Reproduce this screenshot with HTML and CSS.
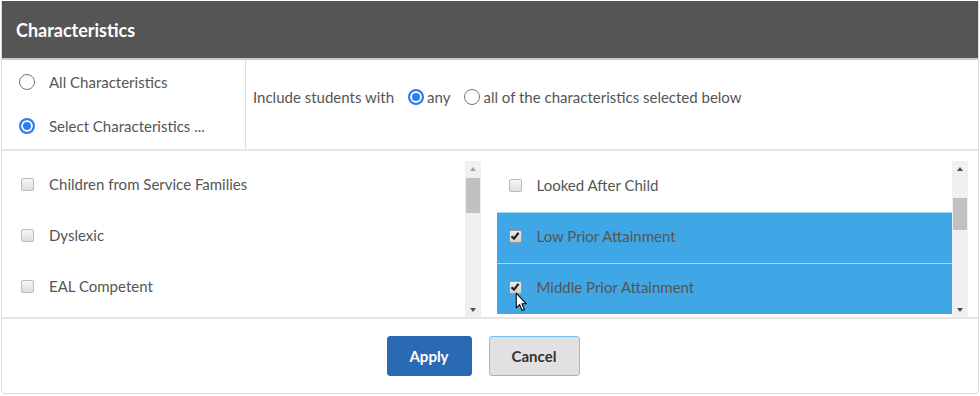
FILE: index.html
```html
<!DOCTYPE html>
<html lang="en">
<head>
  <meta charset="UTF-8" />
  <title>Characteristics</title>
  <link rel="stylesheet" href="styles.css">
</head>
<body>
  <div class="panel">
    <!-- Header -->
    <div class="panel-head">Characteristics</div>

    <!-- Scope choice -->
    <div class="scope">
      <div class="scope-left">
        <label class="opt"><input type="radio" name="scope" /> <span>All Characteristics</span></label>
        <label class="opt"><input type="radio" name="scope" checked /> <span>Select Characteristics ...</span></label>
      </div>
      <div class="scope-right">
        <span class="lead">Include students with</span>
        <label class="inline"><input type="radio" name="match" checked /><span>any</span></label>
        <label class="inline"><input type="radio" name="match" /><span>all of the characteristics selected below</span></label>
      </div>
    </div>

    <!-- Lists -->
    <div class="lists">
      <div class="list">
        <ul class="items">
          <li class="item"><span class="box"></span>Children from Service Families</li>
          <li class="item"><span class="box"></span>Dyslexic</li>
          <li class="item"><span class="box"></span>EAL Competent</li>
        </ul>
        <div class="scrollbar">
          <span class="arrow up dim"></span>
          <span class="thumb thumb-left"></span>
          <span class="arrow down"></span>
        </div>
      </div>
      <div class="list">
        <ul class="items">
          <li class="item"><span class="box"></span>Looked After Child</li>
          <li class="item selected"><span class="box checked"><svg viewBox="0 0 10 10"><path d="M1.5 5.2 L4 7.6 L8.6 1.8" /></svg></span>Low Prior Attainment</li>
          <li class="item selected"><span class="box checked"><svg viewBox="0 0 10 10"><path d="M1.5 5.2 L4 7.6 L8.6 1.8" /></svg></span>Middle Prior Attainment</li>
        </ul>
        <div class="scrollbar">
          <span class="arrow up"></span>
          <span class="thumb thumb-right"></span>
          <span class="arrow down"></span>
        </div>
        <!-- mouse pointer -->
        <svg class="cursor" viewBox="0 0 12 19" width="13" height="20">
          <path d="M1 1 L1 15 L4.2 12 L6.6 17.6 L8.8 16.6 L6.4 11.2 L10.6 11.2 Z" fill="#fff" stroke="#000" stroke-width="1" stroke-linejoin="round" />
        </svg>
      </div>
    </div>

    <!-- Footer -->
    <div class="panel-foot">
      <button class="btn btn-primary">Apply</button>
      <button class="btn btn-default">Cancel</button>
    </div>
  </div>
</body>
</html>
```

FILE: styles.css
```css
/* Base */
*, *::before, *::after {
  box-sizing: border-box;
  margin: 0;
  padding: 0;
}
body {
  font-family: 'Lato', 'Open Sans', sans-serif;
  font-size: 15px;
  color: #555;
  background: #fff;
}
ul { list-style: none; }

/* Panel */
.panel {
  margin: 1px 0 0 1px;
  width: 978px;
  border: 1px solid #ddd;
  border-top: none;
  border-radius: 0 0 4px 4px;
}
.panel-head {
  height: 59px;
  padding-left: 14px;
  display: flex;
  align-items: center;
  background: #555;
  border-bottom: 2px solid #c9c9c9;
  color: #fff;
  font-size: 18px;
  font-weight: 700;
}

/* Scope row */
.scope {
  display: flex;
  height: 91px;
  border-bottom: 2px solid #e6e6e6;
}
.scope-left {
  width: 244px;
  border-right: 1px solid #ddd;
  padding: 13px 0 0 17px;
  display: flex;
  flex-direction: column;
  gap: 26px;
}
.opt {
  display: flex;
  align-items: center;
  gap: 14px;
  height: 18px;
}
.scope-right {
  flex: 1;
  display: flex;
  align-items: center;
  padding: 0 0 16px 7px;
}
.lead { margin-right: 14px; }
.inline {
  display: flex;
  align-items: center;
  gap: 3px;
  margin-right: 14px;
}

/* Radios */
input[type="radio"] {
  appearance: none;
  -webkit-appearance: none;
  width: 16px;
  height: 16px;
  border: 1px solid #767676;
  border-radius: 50%;
  background: #fff;
  flex: none;
}
input[type="radio"]:checked {
  border: 2px solid #2d7cf0;
  background: #2d7cf0;
  box-shadow: inset 0 0 0 2px #fff;
}

/* Lists */
.lists {
  display: flex;
  gap: 16px;
  padding: 10px 10px 0 7px;
  height: 166px;
}
.list {
  flex: 1;
  display: flex;
  height: 156px;
  position: relative;
}
.items {
  flex: 1;
  overflow: hidden;
}
.item {
  height: 51px;
  display: flex;
  align-items: center;
  padding: 0 0 4px 12px;
  border-bottom: 1px solid #fff;
}
.list:last-child .item { padding-top: 1px; padding-bottom: 3px; }
.list:last-child .item.selected {
  background: #3fa7e5;
  border-top: 1px solid #a9d6f3;
  border-bottom: none;
  padding-top: 0;
  padding-bottom: 4px;
}
.box {
  width: 13px;
  height: 13px;
  margin-right: 15px;
  border: 1px solid #bcbcbc;
  border-radius: 2px;
  background: linear-gradient(#f6f6f6, #dedede);
  display: flex;
  align-items: center;
  justify-content: center;
}
.box.checked {
  border-color: #9a9a9a;
  background: linear-gradient(#eee, #cfcfcf);
}
.box svg {
  width: 10px;
  height: 10px;
  fill: none;
  stroke: #222;
  stroke-width: 2.2;
}

/* Fake scrollbars */
.scrollbar {
  width: 16px;
  background: #f0f0f0;
  position: relative;
}
.arrow {
  position: absolute;
  left: 5px;
  width: 0;
  height: 0;
  border-left: 3.5px solid transparent;
  border-right: 3.5px solid transparent;
}
.arrow.up { top: 6px; border-bottom: 4px solid #505050; }
.arrow.up.dim { border-bottom-color: #a3a3a3; }
.arrow.down { bottom: 5px; border-top: 4px solid #505050; }
.thumb {
  position: absolute;
  left: 1px;
  right: 1px;
  background: #c1c1c1;
}
.thumb-left { top: 17px; height: 35px; }
.thumb-right { top: 37px; height: 32px; }

.cursor {
  position: absolute;
  left: 18px;
  top: 131px;
}

/* Footer */
.panel-foot {
  border-top: 2px solid #e6e6e6;
  height: 76px;
  display: flex;
  align-items: center;
  justify-content: center;
  gap: 17px;
  padding-right: 14px;
}
.btn {
  height: 40px;
  border-radius: 3px;
  font-family: inherit;
  font-size: 15px;
  font-weight: 700;
  cursor: pointer;
}
.btn-primary {
  width: 85px;
  background: #2a6ab4;
  border: 1px solid #2a6ab4;
  color: #fff;
}
.btn-default {
  width: 91px;
  background: #e1e1e1;
  border: 1px solid #7cc0ee;
  color: #333;
}
```
